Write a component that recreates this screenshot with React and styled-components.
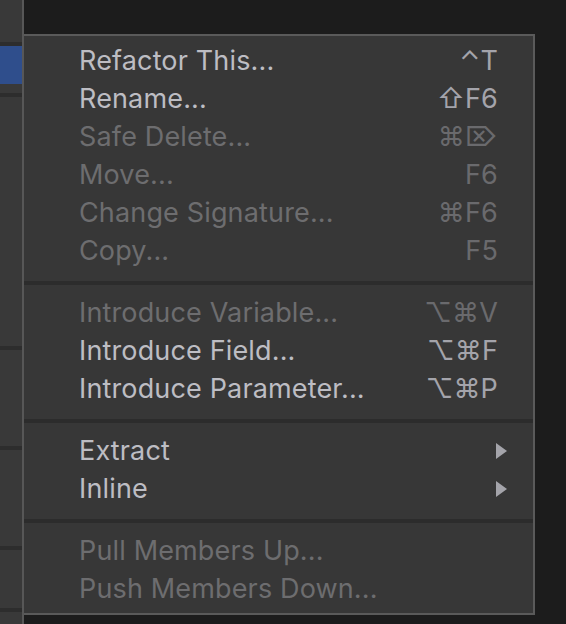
import styled, { createGlobalStyle } from "styled-components";

const GlobalStyle = createGlobalStyle`
    html, body {
        margin: 0;
        padding: 0;
        background: #1c1c1c;
    }
    body {
        font-family: Inter, "DejaVu Sans", sans-serif;
    }
`

const groups = [
    [
        { label: "Refactor This...", keys: "⌃T" },
        { label: "Rename...", keys: "⇧F6" },
        { label: "Safe Delete...", keys: "⌘⌦", disabled: true },
        { label: "Move...", keys: "F6", disabled: true },
        { label: "Change Signature...", keys: "⌘F6", disabled: true },
        { label: "Copy...", keys: "F5", disabled: true },
    ],
    [
        { label: "Introduce Variable...", keys: "⌥⌘V", disabled: true },
        { label: "Introduce Field...", keys: "⌥⌘F" },
        { label: "Introduce Parameter...", keys: "⌥⌘P" },
    ],
    [
        { label: "Extract", submenu: true },
        { label: "Inline", submenu: true },
    ],
    [
        { label: "Pull Members Up...", disabled: true },
        { label: "Push Members Down...", disabled: true },
    ],
]

const sideRows = [
    { height: 42 },
    { height: 38, selected: true, plain: true },
    { height: 9 },
    { height: 249 },
    { height: 96 },
    { height: 96 },
    { height: 58 },
    { height: 20, plain: true },
]

const App = () => {
    return (
        <>
            <GlobalStyle />
            <Screen>
                <SidePanel>
                    {sideRows.map((row, index) => (
                        <SideRow key={index} $height={row.height} $selected={row.selected} $plain={row.plain} />
                    ))}
                </SidePanel>

                <Stage>
                    <Menu>
                        {groups.map((group, gi) => (
                            <Group key={gi} $first={gi === 0}>
                                {group.map((item) => (
                                    <Item key={item.label} $disabled={item.disabled}>
                                        <Label>{item.label}</Label>
                                        {item.keys && <Keys $disabled={item.disabled}>{item.keys}</Keys>}
                                        {item.submenu && <Arrow />}
                                    </Item>
                                ))}
                            </Group>
                        ))}
                    </Menu>
                </Stage>
            </Screen>
        </>
    )
}

const Screen = styled.div`
    display: flex;
    width: 566px;
    height: 624px;
    overflow: hidden;
`

const SidePanel = styled.div`
    width: 22px;
    flex-shrink: 0;
    display: flex;
    flex-direction: column;
    background-color: #393939;
    border-right: 2px solid #575757;
`

const SideRow = styled.div`
    height: ${({ $height }) => $height}px;
    flex-shrink: 0;
    background-color: ${({ $selected }) => ($selected ? "#2f4e8c" : "#393939")};
    border-bottom: ${({ $plain }) => ($plain ? "none" : "4px solid #2d2d2d")};
`

const Stage = styled.div`
    flex: 1;
    background-color: #1c1c1c;
    padding-top: 34px;
`

const Menu = styled.div`
    width: 511px;
    height: 581px;
    box-sizing: border-box;
    background-color: #373737;
    border: 2px solid #5a5a5a;
    border-left: none;
    display: flex;
    flex-direction: column;
    padding: 6px 0 5px;
`

const Group = styled.div`
    display: flex;
    flex-direction: column;
    border-top: ${({ $first }) => ($first ? "none" : "4px solid #2c2c2c")};
    margin-top: ${({ $first }) => ($first ? "0" : "11px")};
    padding-top: ${({ $first }) => ($first ? "0" : "9px")};
`

const Item = styled.div`
    height: 38px;
    display: flex;
    align-items: center;
    padding: 0 26px 0 55px;
    color: ${({ $disabled }) => ($disabled ? "#6d6d6f" : "#bdbdc3")};
    font-size: 27px;
    line-height: 38px;
    letter-spacing: 0.15px;
`

const Label = styled.span`
    flex: 1;
    white-space: nowrap;
`

const Keys = styled.span`
    margin-right: 9px;
    color: ${({ $disabled }) => ($disabled ? "#6a6a6d" : "#a4a4ab")};
    white-space: nowrap;
`

const Arrow = styled.span`
    width: 0;
    height: 0;
    border-top: 8px solid transparent;
    border-bottom: 8px solid transparent;
    border-left: 11px solid #a4a4aa;
`

export default App;
